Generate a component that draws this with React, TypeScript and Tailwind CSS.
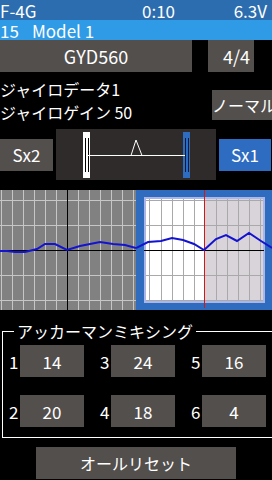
import React from 'react';

const mixes = [
    { no: 1, value: 14 },
    { no: 3, value: 24 },
    { no: 5, value: 16 },
    { no: 2, value: 20 },
    { no: 4, value: 18 },
    { no: 6, value: 4 },
];

const leftCurve = '0,61 7,61 15,62 25,62 37,59 45,54 55,54 67,60 80,56 100,52 113,54 125,55 136,58';
const rightCurve = '0,58 12,52 25,51 36,48 47,50 58,54 68,60 80,49 90,45 101,51 113,43 125,51 136,58';

const Gauge: React.FC = () => (
    <div className="w-[160px] h-[51px] bg-[#2f2b2a] ml-[3px]">
        <svg width="160" height="51" viewBox="0 0 160 51">
            <rect x="27" y="3" width="7" height="46" fill="#ffffff" />
            <line x1="29.5" y1="9" x2="29.5" y2="43" stroke="#000" strokeWidth="1" />
            <line x1="32.5" y1="9" x2="32.5" y2="43" stroke="#000" strokeWidth="1" />
            <rect x="127" y="3" width="7" height="46" fill="#2e6cc2" />
            <line x1="129.5" y1="9" x2="129.5" y2="43" stroke="#0a1a30" strokeWidth="1" />
            <line x1="132.5" y1="9" x2="132.5" y2="43" stroke="#0a1a30" strokeWidth="1" />
            <line x1="32" y1="26.5" x2="129" y2="26.5" stroke="#fff" strokeWidth="1" />
            <polyline points="75,26.5 80,11 86,26.5" fill="none" stroke="#fff" strokeWidth="1" />
        </svg>
    </div>
);

const LeftGraph: React.FC = () => {
    const xs = [1.5, 12.5, 23.5, 34.5, 45.5, 56.5, 78.5, 89.5, 100.5, 111.5, 122.5, 133.5];
    const ys = [10.5, 35.5, 85.5, 110.5];
    return (
        <svg width="136" height="120" viewBox="0 0 136 120" className="block">
            <rect x="0" y="0" width="136" height="120" fill="#818181" />
            {xs.map((x) => (
                <line key={x} x1={x} y1="0" x2={x} y2="120" stroke="#c6c6c6" strokeWidth="1" />
            ))}
            {ys.map((y) => (
                <line key={y} x1="0" y1={y} x2="136" y2={y} stroke="#c6c6c6" strokeWidth="1" />
            ))}
            <line x1="67.5" y1="0" x2="67.5" y2="120" stroke="#000" strokeWidth="1" />
            <line x1="0" y1="60.5" x2="136" y2="60.5" stroke="#000" strokeWidth="1" />
            <polyline points={leftCurve} fill="none" stroke="#1414d0" strokeWidth="2" />
        </svg>
    );
};

const RightGraph: React.FC = () => {
    const xs = [13.5, 25.5, 36.5, 47.5, 58.5, 80.5, 91.5, 102.5, 113.5, 124.5];
    const ys = [10.5, 35.5, 85.5, 110.5];
    return (
        <svg width="136" height="120" viewBox="0 0 136 120" className="block">
            <rect x="0" y="0" width="136" height="120" fill="#2f6cc0" />
            <rect x="8" y="7" width="121" height="106" fill="#aab6e8" />
            <rect x="10" y="9" width="58" height="102" fill="#ffffff" />
            <rect x="68" y="9" width="59" height="102" fill="#d9d3da" />
            {xs.map((x) => (
                <line key={x} x1={x} y1="9" x2={x} y2="111" stroke="#a9a9a9" strokeWidth="1" />
            ))}
            {ys.map((y) => (
                <line key={y} x1="10" y1={y} x2="127" y2={y} stroke="#a9a9a9" strokeWidth="1" />
            ))}
            <line x1="8" y1="60.5" x2="128" y2="60.5" stroke="#000" strokeWidth="1" />
            <line x1="68.5" y1="0" x2="68.5" y2="118" stroke="#d01818" strokeWidth="1" />
            <polyline points={rightCurve} fill="none" stroke="#1414d0" strokeWidth="2" />
        </svg>
    );
};

export default function App() {
    return (
        <div className="w-[272px] h-[480px] bg-black overflow-hidden text-white text-[16px] font-['Noto_Sans_CJK_JP','Noto_Sans',sans-serif]">
            {/* status bar */}
            <div className="h-[20px] bg-[#2b6daf] flex items-center text-[17px] leading-none">
                <span className="w-[142px]">F-4G</span>
                <span>0:10</span>
                <span className="ml-auto pr-[5px]">6.3V</span>
            </div>
            <div className="h-[20px] bg-[#2f9be6] flex items-center text-[17px] leading-none">
                <span className="w-[32px]">15</span>
                <span>Model 1</span>
            </div>

            {/* function title */}
            <div className="flex h-[32px] text-[18px] leading-none">
                <div className="w-[192px] bg-[#534f4d] flex items-center justify-center">GYD560</div>
                <div className="w-[46px] ml-[16px] bg-[#534f4d] flex items-center pl-[15px]">4/4</div>
            </div>

            <div className="flex h-[57px] pt-[6px]">
                <div className="w-[212px] leading-[23px]">
                    <div>ジャイロデータ1</div>
                    <div>ジャイロゲイン 50</div>
                </div>
                <div className="w-[60px] h-[30px] mt-[12px] bg-[#534f4d] overflow-hidden whitespace-nowrap leading-[30px]">ノーマル</div>
            </div>

            {/* sensor gauge */}
            <div className="flex items-center h-[51px] text-[17px] leading-none">
                <div className="w-[53px] h-[32px] bg-[#534f4d] flex items-center justify-center">Sx2</div>
                <Gauge />
                <div className="w-[52px] h-[32px] ml-[3px] bg-[#2e6cc2] flex items-center justify-center">Sx1</div>
            </div>

            {/* graphs */}
            <div className="flex mt-[10px] h-[120px]">
                <LeftGraph />
                <RightGraph />
            </div>

            {/* ackerman mixing */}
            <fieldset className="mt-[10px] mx-[2px] w-[269px] border border-white pb-[10px]">
                <legend className="ml-[11px] px-[3px] leading-[23px]">アッカーマンミキシング</legend>
                <div className="grid grid-cols-[91px_91px_91px] gap-y-[18px] pt-[2px] pl-[5px] text-[17px] leading-none">
                    {mixes.map((m) => (
                        <div key={m.no} className="flex items-center h-[32px]">
                            <span className="w-[12px] pl-[1px]">{m.no}</span>
                            <div className="w-[64px] h-[32px] bg-[#534f4d] flex items-center justify-center">{m.value}</div>
                        </div>
                    ))}
                </div>
            </fieldset>

            <div className="mt-[9px] ml-[36px] w-[200px] h-[32px] bg-[#534f4d] flex items-center justify-center">オールリセット</div>
        </div>
    );
}
